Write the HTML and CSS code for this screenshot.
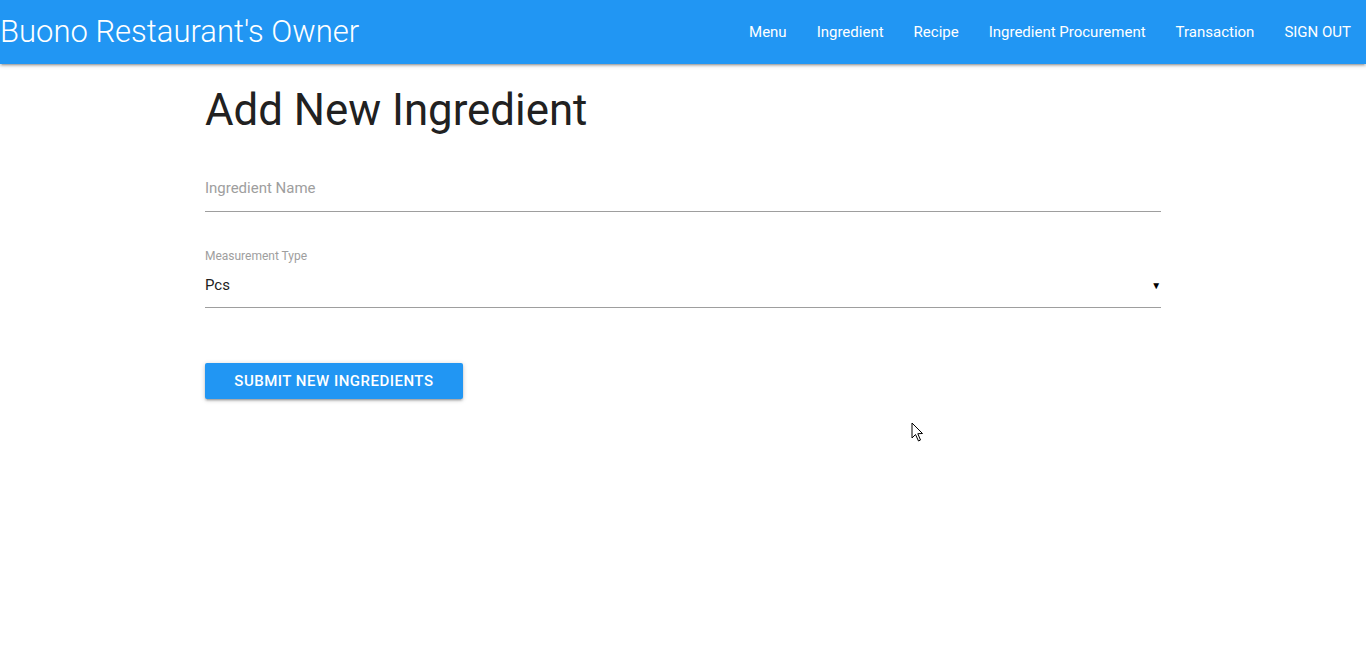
FILE: index.html
```html
<!DOCTYPE html>
<html>
<head>
<meta charset="utf-8">
<link rel="stylesheet" href="styles.css">
</head>
<body>
<nav class="nav">
  <a class="brand" href="#">Buono Restaurant's Owner</a>
  <ul class="links">
    <li><a href="#">Menu</a></li>
    <li><a href="#">Ingredient</a></li>
    <li><a href="#">Recipe</a></li>
    <li><a href="#">Ingredient Procurement</a></li>
    <li><a href="#">Transaction</a></li>
    <li><a href="#">SIGN OUT</a></li>
  </ul>
</nav>
<main class="container">
  <h3 class="title">Add New Ingredient</h3>
  <div class="field">
    <input class="text-input" type="text" placeholder="Ingredient Name">
  </div>
  <div class="field select-field">
    <label class="small-label">Measurement Type</label>
    <div class="select">
      <span class="select-value">Pcs</span>
      <span class="caret">▼</span>
    </div>
  </div>
  <button class="btn">SUBMIT NEW INGREDIENTS</button>
</main>
<svg class="cursor" width="14" height="21" viewBox="0 0 14 21">
  <path d="M1 1 L1 16 L4.5 12.5 L7.5 19 L9.5 18 L6.8 11.7 L11.5 11.5 Z" fill="#fff" stroke="#000" stroke-width="1" stroke-linejoin="miter"/>
</svg>
</body>
</html>
```
FILE: styles.css
```css
* { box-sizing: border-box; }
html, body { margin: 0; padding: 0; }
body {
  font-family: Roboto, "Noto Sans", sans-serif;
  background: #fff;
  color: rgba(0,0,0,0.87);
  position: relative;
  min-height: 667px;
}
.nav {
  height: 64px;
  background: #2196f3;
  display: flex;
  align-items: center;
  justify-content: space-between;
  box-shadow: 0 2px 2px 0 rgba(0,0,0,0.14), 0 3px 1px -2px rgba(0,0,0,0.12), 0 1px 5px 0 rgba(0,0,0,0.2);
}
.brand {
  color: #fff;
  text-decoration: none;
  font-weight: 300;
  font-size: 31px;
  line-height: 64px;
  padding-left: 0;
}
.links {
  list-style: none;
  margin: 0;
  padding: 0;
  display: flex;
}
.links a {
  display: block;
  padding: 0 15px;
  color: #fff;
  text-decoration: none;
  font-size: 15px;
  font-weight: 400;
  line-height: 64px;
}
.container {
  width: 70%;
  margin: 0 auto;
}
.title {
  font-size: 43.8px;
  font-weight: 400;
  margin: 22px 0 0;
  line-height: 1.1;
  color: #212121;
}
.field {
  margin-top: 30px;
}
.text-input {
  width: 100%;
  height: 48px;
  border: none;
  border-bottom: 1px solid #9e9e9e;
  outline: none;
  font-family: inherit;
  font-size: 15px;
  padding: 0;
  background: transparent;
}
.text-input::placeholder { color: #9e9e9e; }
.select-field { margin-top: 37px; }
.small-label {
  display: block;
  font-size: 12px;
  color: #9e9e9e;
  line-height: 14px;
}
.select {
  display: flex;
  justify-content: space-between;
  align-items: center;
  height: 45px;
  border-bottom: 1px solid #9e9e9e;
  font-size: 15px;
  color: #212121;
}
.select-value { padding-top: 0; }
.caret {
  font-size: 10px;
  color: #000;
  padding-right: 0;
}
.btn {
  margin-top: 55px;
  height: 36px;
  width: 258px;
  border: none;
  border-radius: 2px;
  background: #2196f3;
  color: #fff;
  font-family: inherit;
  font-size: 15px;
  font-weight: 500;
  letter-spacing: 0.5px;
  box-shadow: 0 2px 2px 0 rgba(0,0,0,0.14), 0 3px 1px -2px rgba(0,0,0,0.12), 0 1px 5px 0 rgba(0,0,0,0.2);
  padding: 0;
}
.cursor {
  position: absolute;
  left: 911px;
  top: 422px;
}
```
